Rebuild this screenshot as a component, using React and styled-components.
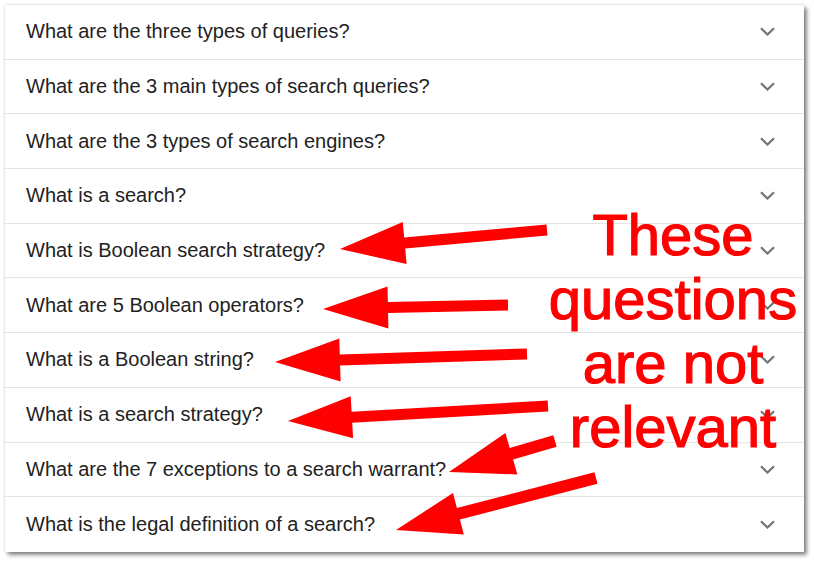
import React from 'react'
import styled, { createGlobalStyle } from 'styled-components'

const questions = [
  'What are the three types of queries?',
  'What are the 3 main types of search queries?',
  'What are the 3 types of search engines?',
  'What is a search?',
  'What is Boolean search strategy?',
  'What are 5 Boolean operators?',
  'What is a Boolean string?',
  'What is a search strategy?',
  'What are the 7 exceptions to a search warrant?',
  'What is the legal definition of a search?',
]

// tip, tail, head length, head half width, shaft width
const arrows = [
  [[340, 249], [547, 230], 65, 21, 11],
  [[323, 309], [508, 305], 65, 21, 11],
  [[275, 362], [527, 354], 65, 21.5, 11],
  [[288, 421], [548, 406], 64, 21, 11],
  [[449, 472], [555, 441], 65, 21.5, 12],
  [[396, 530], [596, 478], 64.5, 21.5, 12],
]

const arrowPoints = ([tx, ty], [ex, ey], headLen, headHalf, shaft) => {
  const len = Math.hypot(ex - tx, ey - ty)
  const ux = (ex - tx) / len
  const uy = (ey - ty) / len
  const nx = -uy
  const ny = ux
  const bx = tx + ux * headLen
  const by = ty + uy * headLen
  const s = shaft / 2
  const pts = [
    [tx, ty],
    [bx + nx * headHalf, by + ny * headHalf],
    [bx + nx * s, by + ny * s],
    [ex + nx * s, ey + ny * s],
    [ex - nx * s, ey - ny * s],
    [bx - nx * s, by - ny * s],
    [bx - nx * headHalf, by - ny * headHalf],
  ]
  return pts.map((p) => p.map((v) => v.toFixed(1)).join(',')).join(' ')
}

const Chevron = () => (
  <svg width="15" height="9" viewBox="0 0 15 9">
    <path
      d="M1 1.2 L7.5 7.5 L14 1.2"
      fill="none"
      stroke="#70757a"
      strokeWidth="2.2"
    />
  </svg>
)

const App = () => {
  return (
    <>
      <GlobalStyle />
      <Page>
        <Card>
          {questions.map((q) => (
            <Row key={q}>
              <Question>{q}</Question>
              <Chevron />
            </Row>
          ))}
        </Card>
        <Arrows width="814" height="562" viewBox="0 0 814 562">
          {arrows.map((a, i) => (
            <polygon key={i} points={arrowPoints(...a)} fill="#ff0000" />
          ))}
        </Arrows>
        <Note>
          These
          <br />
          questions
          <br />
          are not
          <br />
          relevant
        </Note>
      </Page>
    </>
  )
}

const GlobalStyle = createGlobalStyle`
  body {
    margin: 0;
    background: #ffffff;
  }
`

const Page = styled.div`
  position: relative;
  width: 814px;
  height: 562px;
  padding: 5px 0 0 5px;
  box-sizing: border-box;
  overflow: hidden;
`

const Card = styled.div`
  width: 799px;
  background: #ffffff;
  box-shadow: 0 0 3px rgba(0, 0, 0, 0.18), 3px 3px 4px rgba(0, 0, 0, 0.45);
`

const Row = styled.div`
  height: 54.7px;
  box-sizing: border-box;
  display: flex;
  align-items: center;
  justify-content: space-between;
  padding: 0 29px 0 21px;
  border-bottom: 1px solid #e3e3e3;
  &:last-child {
    border-bottom: none;
  }
`

const Question = styled.span`
  font-family: 'Liberation Sans', Arial, sans-serif;
  font-size: 20px;
  color: #222222;
`

const Arrows = styled.svg`
  position: absolute;
  left: 0;
  top: 0;
  pointer-events: none;
`

const Note = styled.div`
  position: absolute;
  left: 543px;
  top: 203px;
  width: 260px;
  text-align: center;
  font-family: 'Liberation Sans', Arial, sans-serif;
  font-size: 58px;
  line-height: 64px;
  color: #ff0000;
  -webkit-text-stroke: 1.2px #ff0000;
`

export default App
